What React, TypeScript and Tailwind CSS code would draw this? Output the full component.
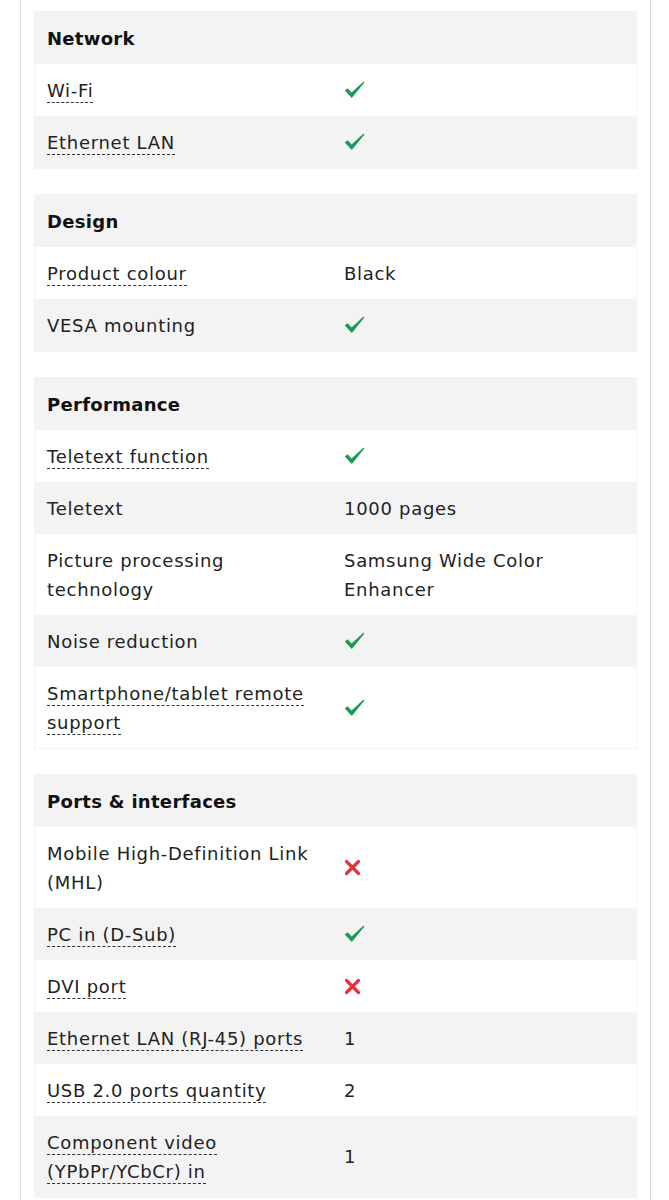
import React from "react";

type Val = "yes" | "no" | string;

interface Row {
  label: string[];
  dotted?: boolean;
  value: Val;
}

interface Section {
  title: string;
  rows: Row[];
}

const SECTIONS: Section[] = [
  {
    title: "Network",
    rows: [
      { label: ["Wi-Fi"], dotted: true, value: "yes" },
      { label: ["Ethernet LAN"], dotted: true, value: "yes" },
    ],
  },
  {
    title: "Design",
    rows: [
      { label: ["Product colour"], dotted: true, value: "Black" },
      { label: ["VESA mounting"], value: "yes" },
    ],
  },
  {
    title: "Performance",
    rows: [
      { label: ["Teletext function"], dotted: true, value: "yes" },
      { label: ["Teletext"], value: "1000 pages" },
      { label: ["Picture processing", "technology"], value: "Samsung Wide Color\nEnhancer" },
      { label: ["Noise reduction"], value: "yes" },
      { label: ["Smartphone/tablet remote", "support"], dotted: true, value: "yes" },
    ],
  },
  {
    title: "Ports & interfaces",
    rows: [
      { label: ["Mobile High-Definition Link", "(MHL)"], value: "no" },
      { label: ["PC in (D-Sub)"], dotted: true, value: "yes" },
      { label: ["DVI port"], dotted: true, value: "no" },
      { label: ["Ethernet LAN (RJ-45) ports"], dotted: true, value: "1" },
      { label: ["USB 2.0 ports quantity"], dotted: true, value: "2" },
      { label: ["Component video", "(YPbPr/YCbCr) in"], dotted: true, value: "1" },
    ],
  },
];

function Check() {
  return (
    <svg width="21" height="18" viewBox="0 0 21 18" aria-hidden="true">
      <path d="M0.8 9.6 L3.6 7.2 L7.6 11.4 L19.6 0.6 L20.4 1.6 L7.8 17 Z" fill="#1b9a55" />
    </svg>
  );
}

function Cross() {
  return (
    <svg width="17" height="17" viewBox="0 0 17 17" aria-hidden="true">
      <path d="M2.5 2.5 L14.5 14.5 M14.5 2.5 L2.5 14.5" stroke="#e2323c" strokeWidth="3.2" strokeLinecap="round" />
    </svg>
  );
}

function Label({ lines, dotted }: { lines: string[]; dotted?: boolean }) {
  return (
    <div>
      {lines.map((l, i) => (
        <div key={i}>
          <span className={dotted ? "border-b border-dashed border-[#333] pb-px" : ""}>{l}</span>
        </div>
      ))}
    </div>
  );
}

function Value({ v }: { v: Val }) {
  if (v === "yes") return <Check />;
  if (v === "no") return <Cross />;
  return <div className="whitespace-pre-line">{v}</div>;
}

export default function App() {
  return (
    <div
      className="min-h-[1200px] bg-white text-[18px] leading-[29px] tracking-[0.7px] text-[#222]"
      style={{ fontFamily: '"DejaVu Sans", "Liberation Sans", sans-serif' }}
    >
      <div className="ml-[20px] mr-[18px] min-h-[1200px] border-x border-[#dcdcdc] px-[13px] pt-[11px]">
        {SECTIONS.map((s) => (
          <div key={s.title} className="mb-[25px] border border-[#f3f3f3]">
            <div className="bg-[#f3f3f3] px-[12px] py-[11.5px] font-bold tracking-[0.3px] text-[#111]">{s.title}</div>
            {s.rows.map((r, i) => (
              <div
                key={r.label.join(" ")}
                className={`flex items-center py-[11.5px] ${i % 2 === 0 ? "bg-white" : "bg-[#f3f3f3]"}`}
              >
                <div className="w-[296px] shrink-0 pl-[12px]">
                  <Label lines={r.label} dotted={r.dotted} />
                </div>
                <div className="pl-[13px]">
                  <Value v={r.value} />
                </div>
              </div>
            ))}
          </div>
        ))}
      </div>
    </div>
  );
}
